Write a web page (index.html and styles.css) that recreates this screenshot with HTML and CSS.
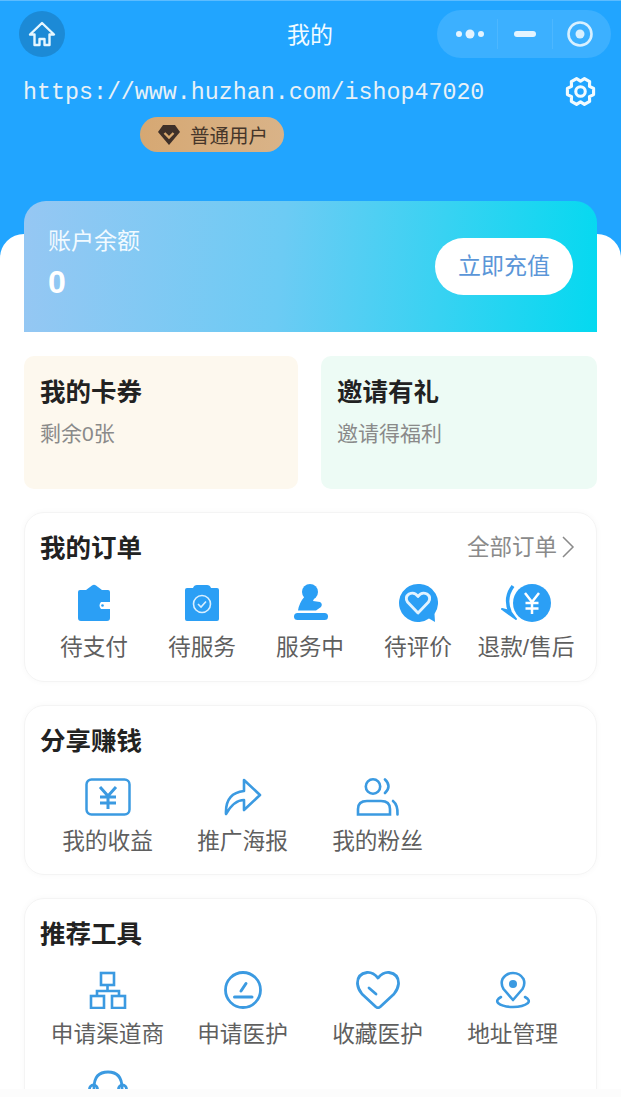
FILE: index.html
```html
<!DOCTYPE html>
<html lang="zh-CN">
<head>
<meta charset="UTF-8">
<meta name="viewport" content="width=device-width, initial-scale=1.0">
<title>我的</title>
<link rel="stylesheet" href="styles.css">
</head>
<body>
<div class="page">
    <div class="hero">
        <div class="navbar">
            <div class="home-btn">
                <svg width="28" height="28" viewBox="0 0 28 28" fill="none" stroke="#e6f7ff" stroke-width="2.4" stroke-linejoin="round"><path d="M14 3 L26 14.5 H21.5 V25 H16.5 V19 H11.5 V25 H6.5 V14.5 H2 Z"/></svg>
            </div>
            <div class="nav-title">我的</div>
            <div class="capsule">
                <div class="capsule-cell cell-more">
                    <svg width="28" height="10" viewBox="0 0 28 10" fill="#e4f4ff"><circle cx="3" cy="5" r="3"/><circle cx="14" cy="5" r="4.5"/><circle cx="25" cy="5" r="3"/></svg>
                </div>
                <div class="capsule-cell cell-min capsule-line">
                    <svg width="22" height="6" viewBox="0 0 22 6" fill="#e4f4ff"><rect width="22" height="6" rx="3"/></svg>
                </div>
                <div class="capsule-cell cell-close capsule-line">
                    <svg width="26" height="26" viewBox="0 0 26 26" fill="none" stroke="#d8f0ff" stroke-width="2.6"><circle cx="13" cy="13" r="11.5"/><circle cx="13" cy="13" r="4.5" fill="#d8f0ff" stroke="none"/></svg>
                </div>
            </div>
        </div>
        <div class="user-row">
            <div class="user-name">https://www.huzhan.com/ishop47020</div>
            <svg class="gear" width="31" height="31" viewBox="0 0 30 30" fill="none" stroke="#f2fbff" stroke-width="3" stroke-linejoin="round"><path d="M27.67 12.08 V17.92 L23.66 20 L23.87 24.51 L18.8 27.43 L15 25 L11.2 27.43 L6.13 24.51 L6.34 20 L2.33 17.92 V12.08 L6.34 10 L6.13 5.49 L11.2 2.57 L15 5 L18.8 2.57 L23.87 5.49 L23.66 10 Z"/><circle cx="15" cy="15" r="4.6"/></svg>
        </div>
        <div class="vip-badge">
            <svg width="22" height="20" viewBox="0 0 22 20"><path d="M5 0 H17 L22 7 L11 20 L0 7 Z" fill="#3e3029"/><path d="M6.5 8 L11 12.5 L15.5 8" fill="none" stroke="#d7a86f" stroke-width="2.4"/></svg>
            <span>普通用户</span>
        </div>
    </div>

    <div class="content">
        <div class="balance-card">
            <div class="balance-left">
                <div class="balance-label">账户余额</div>
                <div class="balance-num">0</div>
            </div>
            <div class="recharge-btn">立即充值</div>
        </div>

        <div class="promo-row">
            <div class="promo promo-card">
                <div class="promo-title">我的卡券</div>
                <div class="promo-sub">剩余0张</div>
            </div>
            <div class="promo promo-invite">
                <div class="promo-title">邀请有礼</div>
                <div class="promo-sub">邀请得福利</div>
            </div>
        </div>

        <div class="panel panel-orders">
            <div class="panel-head">
                <div class="panel-title">我的订单</div>
                <div class="panel-more">全部订单
                    <svg class="more-arrow" width="14" height="22" viewBox="0 0 14 22" fill="none" stroke="#8a8a8a" stroke-width="1.5"><path d="M2 1 L12 11 L2 21"/></svg>
                </div>
            </div>
            <div class="order-grid">
                <div class="item">
                    <svg class="icon" width="38" height="38" viewBox="0 0 38 38"><path d="M5 6 H11 L17 1.500 Q19 0 21 1.500 L27 6 H33 Q35 6 35 8 V18 H26 Q23 21.500 26 25 H35 V34 Q35 37 32 37 H6 Q3 37 3 34 V8 Q3 6 5 6 Z" fill="#2b9ff5"/><circle cx="27.500" cy="21.500" r="1.300" fill="#2b9ff5"/></svg>
                    <span>待支付</span>
                </div>
                <div class="item">
                    <svg class="icon" width="38" height="38" viewBox="0 0 38 38"><path d="M4 4 H10 Q11 1 14 1 H24 Q27 1 28 4 H34 Q36 4 36 6 V35 Q36 37 34 37 H4 Q2 37 2 35 V6 Q2 4 4 4 Z" fill="#2b9ff5"/><circle cx="19" cy="20" r="8.500" fill="none" stroke="#d9efff" stroke-width="1.600"/><path d="M15 20 L18 23 L23 17.500" fill="none" stroke="#d9efff" stroke-width="1.600"/></svg>
                    <span>待服务</span>
                </div>
                <div class="item">
                    <svg class="icon" width="38" height="38" viewBox="0 0 38 38" fill="#2b9ff5"><circle cx="19" cy="8" r="8"/><path d="M7 26.500 Q8 19 14 12 L24 12 L22 17 L29 18 Q32 20 30 23 L25 26.500 Z"/><rect x="3" y="29" width="34" height="7" rx="3.500"/></svg>
                    <span>服务中</span>
                </div>
                <div class="item">
                    <svg class="icon" width="40" height="38" viewBox="0 0 40 38"><path d="M20 0 A19 19 0 1 0 31 34.500 L37 38 L36.500 30 A19 19 0 0 0 20 0 Z" fill="#2b9ff5"/><path d="M20 29 L9.500 18 Q6.500 13 11 10 Q16.500 7.500 20 12.500 Q23.500 7.500 29 10 Q33.500 13 30.500 18 Z" fill="none" stroke="#e2f3ff" stroke-width="2.800" stroke-linejoin="round"/></svg>
                    <span>待评价</span>
                </div>
                <div class="item">
                    <svg class="icon" width="50" height="38" viewBox="0 0 50 38"><path d="M12 2 Q3 14 9 28" fill="none" stroke="#2b9ff5" stroke-width="3.500"/><path d="M1 25 L15 35 L9 27 Z" fill="#2b9ff5" stroke="#2b9ff5" stroke-width="2" stroke-linejoin="round"/><circle cx="31" cy="19" r="19" fill="#2b9ff5"/><path d="M24 9 L31 18 L38 9 M24.500 19 H37.500 M24.500 24.500 H37.500 M31 18 V30" fill="none" stroke="#fff" stroke-width="2.500"/></svg>
                    <span>退款/售后</span>
                </div>
            </div>
        </div>

        <div class="panel panel-share">
            <div class="panel-title">分享赚钱</div>
            <div class="tool-grid">
                <div class="item">
                    <svg class="icon" width="46" height="38" viewBox="0 0 46 38" fill="none" stroke="#3b9ae1" stroke-width="2.500"><rect x="1.500" y="1.500" width="43" height="35" rx="5"/><path d="M15 9 L23 18 L31 9 M15 19 H31 M15 25 H31 M23 18 V31" stroke-width="3"/></svg>
                    <span>我的收益</span>
                </div>
                <div class="item">
                    <svg class="icon" width="38" height="38" viewBox="0 0 38 38" fill="none" stroke="#3b9ae1" stroke-width="2.600" stroke-linejoin="round"><path d="M2 36 Q1 15 20 13 V2 L36 17 L20 32 V22 Q10 22 2 36 Z"/></svg>
                    <span>推广海报</span>
                </div>
                <div class="item">
                    <svg class="icon" width="44" height="38" viewBox="0 0 44 38" fill="none" stroke="#3b9ae1" stroke-width="2.600" stroke-linecap="round"><circle cx="17" cy="8.500" r="7.200"/><path d="M2 36.500 V31 Q2 23 11 23 H25 Q34 23 34 31 V36.500 Z"/><path d="M29 1.500 Q36 8 29 15"/><path d="M37 23 Q42 27 41.500 36.500"/></svg>
                    <span>我的粉丝</span>
                </div>
            </div>
        </div>

        <div class="panel panel-tools">
            <div class="panel-title">推荐工具</div>
            <div class="tool-grid">
                <div class="item">
                    <svg class="icon" width="38" height="38" viewBox="0 0 38 38" fill="none" stroke="#3b9ae1" stroke-width="2.600"><rect x="12" y="2" width="13" height="12"/><path d="M18.500 14 V20 M8 26 V20 H30 V26"/><rect x="2" y="25" width="13" height="12"/><rect x="23" y="25" width="13" height="12"/></svg>
                    <span>申请渠道商</span>
                </div>
                <div class="item">
                    <svg class="icon" width="38" height="38" viewBox="0 0 38 38" fill="none" stroke="#3b9ae1" stroke-width="2.800" stroke-linecap="round"><circle cx="19" cy="19" r="17.500"/><path d="M17 20 L22 12.500 M10.500 26 H28" stroke-width="3"/></svg>
                    <span>申请医护</span>
                </div>
                <div class="item">
                    <svg class="icon" width="44" height="38" viewBox="0 0 44 38" fill="none" stroke="#3b9ae1" stroke-width="2.800" stroke-linecap="round" stroke-linejoin="round"><path d="M22 7 Q27 1 33 1.500 Q43 3 42.500 13 Q42 18 38 23 L24 36 Q22 37.500 20 36 L6 23 Q2 18 1.500 13 Q1 3 11 1.500 Q17 1 22 7 Z"/><path d="M13 17 L20 23"/></svg>
                    <span>收藏医护</span>
                </div>
                <div class="item">
                    <svg class="icon" width="38" height="38" viewBox="0 0 38 38" fill="none" stroke="#3b9ae1" stroke-width="2.600"><path d="M19 29 L9.500 18 Q6.500 13 8.500 8 Q12 2 19 2 Q26 2 29.500 8 Q31.500 13 28.500 18 Z" stroke-linejoin="round"/><circle cx="19" cy="13" r="4" fill="#3b9ae1" stroke="none"/><path d="M7 26 Q1.500 29 4 32 Q9 36 19 36 Q29 36 34 32 Q36.500 29 31 26" stroke-linecap="round"/></svg>
                    <span>地址管理</span>
                </div>
                <div class="item">
                    <svg class="icon" width="40" height="38" viewBox="0 0 40 38" fill="none" stroke="#3b9ae1" stroke-width="2.800"><path d="M6 24 V18 Q6 2 20 2 Q34 2 34 18 V24"/><rect x="1.500" y="15" width="8" height="16" rx="4"/><rect x="30.500" y="15" width="8" height="16" rx="4"/></svg>
                </div>
            </div>
        </div>
    </div>
</div>
</body>
</html>
```

FILE: styles.css
```css
html, body {
    margin: 0;
    padding: 0;
    height: 100%;
    overflow: hidden;
    background: #fcfcfc;
}

.page {
    height: 1089px;
    overflow: hidden;
    font-family: "Liberation Sans", "Noto Sans CJK SC", sans-serif;
    background: #fff;
}

.hero {
    height: 262px;
    padding: 9px 0 0;
    box-sizing: border-box;
    background: #21a5ff;
    border-top: 1px solid #5cbcff;
}

.navbar {
    display: grid;
    grid-template-columns: 1fr auto 1fr;
    align-items: center;
    height: 48px;
    padding: 0 10px 0 19px;
}

.home-btn {
    width: 46px;
    height: 46px;
    border-radius: 50%;
    background: #1c8ad6;
    display: flex;
    align-items: center;
    justify-content: center;
}

.nav-title {
    padding: 0 10px 2px 0;
    font-size: 23px;
    color: #f2fbff;
}

.capsule {
    justify-self: end;
    width: 174px;
    height: 48px;
    border-radius: 24px;
    background: #3cb0ff;
    display: flex;
    align-items: center;
}

.capsule-cell {
    display: flex;
    align-items: center;
    justify-content: center;
    box-sizing: border-box;
}

.cell-more {
    width: 60px;
    padding-left: 6px;
}

.cell-min {
    width: 55px;
}

.cell-close {
    width: 59px;
    padding-right: 4px;
}

.capsule-line {
    border-left: 1px solid #4db7ff;
    height: 30px;
}

.user-row {
    display: flex;
    align-items: center;
    justify-content: space-between;
    height: 30px;
    padding: 18px 25px 0 23px;
}

.user-name {
    padding-top: 4px;
    font-family: "Liberation Mono", monospace;
    font-size: 23.300px;
    color: #e8f1f7;
}

.vip-badge {
    display: flex;
    align-items: center;
    gap: 10px;
    width: 144px;
    height: 35px;
    margin: 11px 0 0 140px;
    box-sizing: border-box;
    padding-left: 18px;
    border-radius: 18px;
    background: linear-gradient(90deg, #d6a873, #d9b388);
    color: #46362a;
    font-size: 19.500px;
}

.content {
    margin-top: -28px;
    padding: 0 24px;
    border-radius: 24px 24px 0 0;
    background: #fff;
    height: 855px;
}

.balance-card {
    display: flex;
    align-items: center;
    justify-content: space-between;
    height: 131px;
    position: relative;
    top: -33px;
    margin-bottom: -33px;
    padding: 0 24px;
    box-sizing: border-box;
    border-radius: 22px 22px 0 0;
    background: linear-gradient(95deg, #96c7f3 0%, #6ccbf4 45%, #04d9f0 100%);
}

.balance-left {
    margin-top: -10px;
}

.balance-label {
    font-size: 23px;
    color: #f2faff;
}

.balance-num {
    margin-top: 8px;
    font-size: 32px;
    font-weight: bold;
    color: #fff;
}

.recharge-btn {
    width: 138px;
    height: 57px;
    margin-top: -1px;
    border-radius: 29px;
    background: #fff;
    color: #5b96d8;
    font-size: 23px;
    line-height: 57px;
    text-align: center;
}

.promo-row {
    display: flex;
    gap: 23px;
    margin-top: 24px;
}

.promo {
    height: 133px;
    box-sizing: border-box;
    padding: 15px 16px;
    border-radius: 10px;
}

.promo-card {
    flex: 0 0 274px;
    background: #fdf8ee;
}

.promo-invite {
    flex: 1;
    background: #edfbf5;
}

.promo-title {
    font-size: 25.500px;
    font-weight: bold;
    color: #222;
}

.promo-sub {
    margin-top: 9px;
    font-size: 21px;
    color: #8a8a8a;
}

.panel {
    margin-top: 23px;
    padding: 18px 15px 0;
    box-sizing: border-box;
    border: 1px solid #f4f4f4;
    border-radius: 20px;
    box-shadow: 0 0 6px rgba(0, 0, 0, 0.03);
}

.panel-orders {
    height: 170px;
}

.panel-share {
    height: 170px;
}

.panel-tools {
    height: 240px;
}

.panel-head {
    display: flex;
    align-items: center;
    justify-content: space-between;
    height: 34px;
}

.panel-title {
    font-size: 25.500px;
    font-weight: bold;
    line-height: 34px;
    color: #222;
}

.panel-more {
    display: flex;
    align-items: center;
    gap: 4px;
    padding: 0 6px 1px 0;
    font-size: 22.500px;
    line-height: 26px;
    color: #8a8a8a;
}

.more-arrow {
    margin-bottom: 1px;
}

.order-grid {
    display: grid;
    grid-template-columns: repeat(5, 108px);
    padding-top: 19px;
}

.tool-grid {
    display: grid;
    grid-template-columns: repeat(4, 135px);
    padding-top: 20px;
}

.item {
    display: flex;
    flex-direction: column;
    align-items: center;
    height: 99px;
    font-size: 22.700px;
    color: #5f5f5f;
    white-space: nowrap;
}

.icon {
    margin-bottom: 7px;
}
```
